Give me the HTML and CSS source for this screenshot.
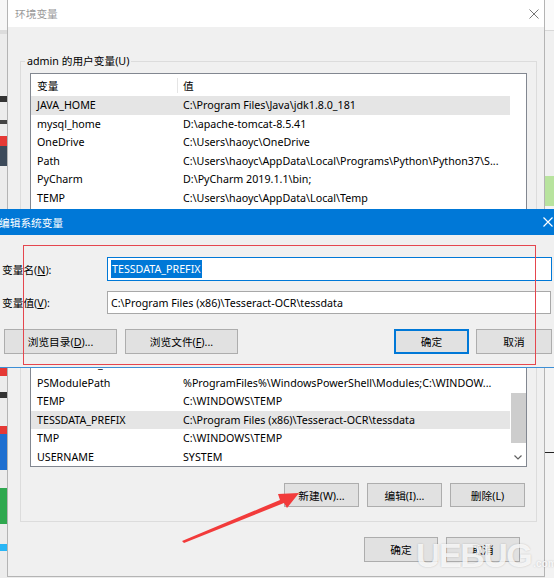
FILE: index.html
```html
<!DOCTYPE html>
<html lang="zh-CN">
<head>
    <meta charset="UTF-8">
    <meta name="viewport" content="width=device-width, initial-scale=1.0">
    <title>环境变量</title>
    <link rel="stylesheet" href="styles.css">
</head>
<body>
    <div class="desktop">
        <div class="side side-left"></div>

        <div class="env">
            <div class="env-title">
                <span>环境变量</span>
                <svg class="close" width="10" height="10" viewBox="0 0 10 10"><path d="M0.5 0.5L9.5 9.5M9.5 0.5L0.5 9.5"/></svg>
            </div>
            <div class="env-body">
                <fieldset class="group">
                    <legend>admin 的用户变量(U)</legend>
                    <div class="list list-user">
                        <div class="list-main">
                            <div class="list-head"><span class="c1">变量</span><span class="c2">值</span></div>
                            <div class="row sel"><span class="c1">JAVA_HOME</span><span class="c2">C:\Program Files\Java\jdk1.8.0_181</span></div>
                            <div class="row"><span class="c1">mysql_home</span><span class="c2">D:\apache-tomcat-8.5.41</span></div>
                            <div class="row"><span class="c1">OneDrive</span><span class="c2">C:\Users\haoyc\OneDrive</span></div>
                            <div class="row"><span class="c1">Path</span><span class="c2">C:\Users\haoyc\AppData\Local\Programs\Python\Python37\S...</span></div>
                            <div class="row"><span class="c1">PyCharm</span><span class="c2">D:\PyCharm 2019.1.1\bin;</span></div>
                            <div class="row"><span class="c1">TEMP</span><span class="c2">C:\Users\haoyc\AppData\Local\Temp</span></div>
                            <div class="row"><span class="c1">TMP</span><span class="c2">C:\Users\haoyc\AppData\Local\Temp</span></div>
                        </div>
                        <div class="scroll"></div>
                    </div>
                    <div class="btns">
                        <button class="btn">新建(N)...</button>
                        <button class="btn">编辑(E)...</button>
                        <button class="btn">删除(D)</button>
                    </div>
                </fieldset>

                <fieldset class="group group-sys">
                    <legend>系统变量(S)</legend>
                    <div class="list list-sys">
                        <div class="list-main">
                            <div class="list-head"><span class="c1">变量</span><span class="c2">值</span></div>
                            <div class="row"><span class="c1">PROCESSOR_IDENTIFIER</span><span class="c2">Intel64 Family 6 Model 142 Stepping 10, GenuineIntel</span></div>
                            <div class="row"><span class="c1">PROCESSOR_LEVEL</span><span class="c2">6</span></div>
                            <div class="row"><span class="c1">PROCESSOR_REVISION</span><span class="c2">8e0a</span></div>
                            <div class="row"><span class="c1">PSModulePath</span><span class="c2">%ProgramFiles%\WindowsPowerShell\Modules;C:\WINDOW...</span></div>
                            <div class="row"><span class="c1">TEMP</span><span class="c2">C:\WINDOWS\TEMP</span></div>
                            <div class="row sel"><span class="c1">TESSDATA_PREFIX</span><span class="c2">C:\Program Files (x86)\Tesseract-OCR\tessdata</span></div>
                            <div class="row"><span class="c1">TMP</span><span class="c2">C:\WINDOWS\TEMP</span></div>
                            <div class="row"><span class="c1">USERNAME</span><span class="c2">SYSTEM</span></div>
                            <div class="row"><span class="c1">windir</span><span class="c2">C:\WINDOWS</span></div>
                        </div>
                        <div class="scroll">
                            <div class="thumb"></div>
                            <svg class="arrow-down" width="8" height="5" viewBox="0 0 8 5"><path d="M0.5 0.5L4 4L7.5 0.5"/></svg>
                        </div>
                    </div>
                    <div class="btns">
                        <button class="btn">新建(W)...</button>
                        <button class="btn">编辑(I)...</button>
                        <button class="btn">删除(L)</button>
                    </div>
                </fieldset>

                <div class="btns btns-main">
                    <button class="btn btn-main">确定</button>
                    <button class="btn btn-main">取消</button>
                </div>
            </div>
        </div>

        <div class="side side-right"></div>

        <!-- edit dialog sits on top of the env window -->
        <div class="edit">
            <div class="edit-title">
                <span>编辑系统变量</span>
                <svg class="close" width="10" height="10" viewBox="0 0 10 10"><path d="M0.5 0.5L9.5 9.5M9.5 0.5L0.5 9.5"/></svg>
            </div>
            <div class="edit-body">
                <div class="field">
                    <label>变量名(<u>N</u>):</label>
                    <div class="input focus"><span class="sel-text">TESSDATA_PREFIX</span></div>
                </div>
                <div class="field">
                    <label>变量值(<u>V</u>):</label>
                    <div class="input input-value">C:\Program Files (x86)\Tesseract-OCR\tessdata</div>
                </div>
                <div class="edit-btns">
                    <button class="btn btn-wide">浏览目录(<u>D</u>)...</button>
                    <button class="btn btn-wide">浏览文件(<u>F</u>)...</button>
                    <button class="btn btn-ok default">确定</button>
                    <button class="btn btn-ok">取消</button>
                </div>
                <div class="mark-box"></div>
            </div>
        </div>

        <svg class="arrow" width="554" height="578" viewBox="0 0 554 578">
            <polygon points="182,541 280,500 278,494 299,493 287,508 284,503 184,543"/>
        </svg>

        <div class="watermark">UEBUG<small>.com</small></div>
    </div>
</body>
</html>
```

FILE: styles.css
```css
* {
    box-sizing: border-box;
}
body, html {
    margin: 0;
    padding: 0;
}
body {
    font: 10.7px "Noto Sans", "Noto Sans CJK SC", sans-serif;
    color: #000;
}
.desktop {
    position: relative;
    display: flex;
    width: 554px;
    height: 578px;
    overflow: hidden;
    background: #ececec;
}
.side-left {
    width: 7px;
    flex: none;
    background: linear-gradient(to bottom,
        #f6f6f6 0 30px, #dcdcdc 30px 34px, #ececec 34px 96px, #333 96px 102px,
        #ececec 102px 120px, #444 120px 124px, #ececec 124px 136px, #e53935 136px 146px,
        #3c4a5a 146px 166px, #ececec 166px 366px, #e53935 366px 376px, #ececec 376px 392px,
        #333 392px 398px, #ececec 398px 426px, #e53935 426px 434px, #1e6fd0 434px 470px,
        #ececec 470px 488px, #2fa84f 488px 524px, #ececec 524px 544px, #29b6f6 544px 551px,
        #ececec 551px);
}
.side-right {
    width: 9px;
    flex: none;
    background: linear-gradient(to bottom,
        #fafafa 0 30px, #d8d8d8 30px 31px, #f0f0f0 31px 176px, #b8e39e 176px 206px,
        #f3f3f3 206px 452px, #222 452px 453px, #f3f3f3 453px);
}
.env {
    width: 538px;
    height: 577px;
    flex: none;
    display: flex;
    flex-direction: column;
    background: #f0f0f0;
    border: 1px solid #b4b4b4;
    border-top: 0;
}
.env-title {
    height: 27px;
    flex: none;
    display: flex;
    align-items: center;
    justify-content: space-between;
    padding: 0 5px 0 7px;
    background: #fff;
    color: #9a9a9a;
}
.close path {
    stroke: #777;
    stroke-width: 1;
    fill: none;
}
.env-body {
    padding: 26px 7px 0 12px;
}
.group {
    margin: 0;
    padding: 4px 9px 14px;
    border: 1px solid #dcdcdc;
    min-width: 0;
}
.group legend {
    padding: 0 2px;
    margin-left: -5px;
    line-height: 16px;
}
.group-sys {
    margin-top: 8px;
}
.list {
    display: flex;
    background: #fff;
    border: 1px solid #828790;
    overflow: hidden;
}
.list-user {
    height: 139px;
}
.list-sys {
    height: 172px;
}
.list-main {
    width: 479px;
    flex: none;
}
.list-head {
    display: flex;
    align-items: center;
    height: 22px;
}
.list-head .c2 {
    border-left: 1px solid #e5e5e5;
    padding-left: 5px;
}
.row {
    display: flex;
    align-items: center;
    height: 18.5px;
    white-space: nowrap;
}
.row.sel {
    background: #e5e5e5;
}
.c1 {
    width: 146px;
    flex: none;
    padding-left: 6px;
    overflow: hidden;
}
.c2 {
    flex: 1;
    padding-left: 6px;
    overflow: hidden;
}
.scroll {
    flex: 1;
    display: flex;
    flex-direction: column;
    align-items: center;
    background: #fff;
}
.thumb {
    width: 15px;
    height: 50px;
    margin-top: 97px;
    background: #cdcdcd;
}
.arrow-down {
    margin-top: auto;
    margin-bottom: 6px;
}
.arrow-down path {
    stroke: #606060;
    stroke-width: 1.2;
    fill: none;
}
.btns {
    display: flex;
    justify-content: flex-end;
    gap: 8px;
    margin-top: 16px;
    padding-right: 2px;
}
.btn {
    height: 24px;
    width: 75px;
    padding: 0;
    border: 1px solid #adadad;
    background: #e1e1e1;
    font: inherit;
    color: #000;
}
.btns-main {
    margin-top: 15px;
    padding-right: 17px;
}
.btn-main {
    width: 74px;
    height: 25px;
}

/* edit dialog */
.edit {
    position: absolute;
    left: -10px;
    top: 209px;
    width: 575px;
    background: #f0f0f0;
    border-bottom: 1px solid #3c8fd6;
}
.edit-title {
    height: 26px;
    display: flex;
    align-items: center;
    justify-content: space-between;
    padding: 0 12px 0 9px;
    background: #0078d7;
    color: #fff;
}
.edit-title .close path {
    stroke: #fff;
    stroke-width: 1.2;
}
.edit-body {
    position: relative;
    padding: 22px 13px 13px 12px;
}
.field {
    display: flex;
    align-items: center;
}
.field + .field {
    margin-top: 10px;
}
.field label {
    width: 105px;
    flex: none;
}
.input {
    width: 446px;
    height: 24px;
    display: flex;
    align-items: center;
    padding-left: 3px;
    background: #fff;
    border: 1px solid #a8a8a8;
    white-space: nowrap;
}
.input.focus {
    border-color: #0078d7;
}
.input-value {
    height: 23px;
    width: 444px;
}
.sel-text {
    background: #0078d7;
    color: #fff;
    line-height: 18px;
    padding: 0 1px;
}
.edit-btns {
    display: flex;
    margin-top: 15px;
    padding-left: 2px;
}
.btn-wide {
    width: 113px;
    height: 25px;
    margin-right: 8px;
}
.btn-ok {
    width: 76px;
    height: 25px;
    margin-left: 7px;
}
.btn-ok.default {
    width: 75px;
    margin-left: auto;
    border: 2px solid #0078d7;
}
.mark-box {
    position: absolute;
    left: 33px;
    top: 10px;
    width: 513px;
    height: 120px;
    border: 1px solid #e5464e;
}

.arrow {
    position: absolute;
    left: 0;
    top: 0;
    pointer-events: none;
}
.arrow polygon {
    fill: #f23b3b;
}
.watermark {
    position: absolute;
    left: 416px;
    top: 536px;
    font: bold 34px "Liberation Sans", sans-serif;
    color: rgba(255, 255, 255, 0.82);
    text-shadow: 0 0 2px rgba(0, 0, 0, 0.2);
    letter-spacing: -1.5px;
}
.watermark small {
    font-size: 10px;
    letter-spacing: 0;
    margin-left: 2px;
}
```
